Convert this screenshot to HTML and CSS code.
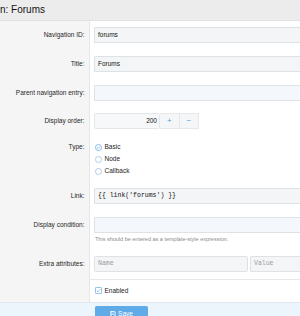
FILE: index.html
```html
<!DOCTYPE html>
<html>
<head>
<meta charset="utf-8">
<link rel="stylesheet" href="styles.css">
</head>
<body>
<div class="page">
  <h1 class="title">n: Forums</h1>
  <div class="form">
    <div class="row">
      <div class="label">Navigation ID:</div>
      <div class="ctrl"><div class="input input--open">forums</div></div>
    </div>
    <div class="row">
      <div class="label">Title:</div>
      <div class="ctrl"><div class="input input--open">Forums</div></div>
    </div>
    <div class="row">
      <div class="label">Parent navigation entry:</div>
      <div class="ctrl"><div class="input input--open input--select"></div></div>
    </div>
    <div class="row">
      <div class="label">Display order:</div>
      <div class="ctrl">
        <div class="numbox">
          <div class="input input--num">200</div>
          <div class="numbtn">+</div>
          <div class="numbtn">&minus;</div>
        </div>
      </div>
    </div>
    <div class="row row--choices">
      <div class="label label--choices">Type:</div>
      <div class="ctrl ctrl--choices">
        <div class="choice">
          <svg class="radio" viewBox="0 0 8 8" width="7" height="7"><circle cx="4" cy="4" r="3.5" fill="#fff" stroke="#5aa6e3" stroke-width="0.8"/><path d="M2.3 4.1 L3.5 5.2 L5.8 2.9" fill="none" stroke="#5aa6e3" stroke-width="0.8"/></svg>
          <span>Basic</span>
        </div>
        <div class="choice">
          <svg class="radio" viewBox="0 0 8 8" width="7" height="7"><circle cx="4" cy="4" r="3.5" fill="#fff" stroke="#8fbde3" stroke-width="0.8"/></svg>
          <span>Node</span>
        </div>
        <div class="choice">
          <svg class="radio" viewBox="0 0 8 8" width="7" height="7"><circle cx="4" cy="4" r="3.5" fill="#fff" stroke="#8fbde3" stroke-width="0.8"/></svg>
          <span>Callback</span>
        </div>
      </div>
    </div>
    <div class="row">
      <div class="label">Link:</div>
      <div class="ctrl"><div class="input input--open input--code">{{ link('forums') }}</div></div>
    </div>
    <div class="row">
      <div class="label">Display condition:</div>
      <div class="ctrl">
        <div class="input input--open input--code input--blue"></div>
        <div class="hint">This should be entered as a template-style expression.</div>
      </div>
    </div>
    <div class="row">
      <div class="label">Extra attributes:</div>
      <div class="ctrl">
        <div class="pair">
          <div class="input input--code input--ph input--name">Name</div>
          <div class="input input--open input--code input--ph input--value">Value</div>
        </div>
      </div>
    </div>
    <div class="row row--check">
      <div class="label"></div>
      <div class="ctrl ctrl--check">
        <div class="choice">
          <svg class="check" viewBox="0 0 8 8" width="7" height="7"><rect x="0.5" y="0.5" width="7" height="7" rx="0.8" fill="#fff" stroke="#5aa6e3" stroke-width="0.8"/><path d="M2 4.1 L3.4 5.4 L6 2.7" fill="none" stroke="#5aa6e3" stroke-width="0.8"/></svg>
          <span>Enabled</span>
        </div>
      </div>
    </div>
  </div>
  <div class="footer">
    <div class="btn">
      <svg viewBox="0 0 8 8" width="6" height="6"><path d="M0.6 0.6 H6 L7.4 2 V7.4 H0.6 Z" fill="none" stroke="#fff" stroke-width="0.8"/><rect x="2" y="0.6" width="3.6" height="2.2" fill="none" stroke="#fff" stroke-width="0.7"/><rect x="2" y="4.6" width="4" height="2.8" fill="none" stroke="#fff" stroke-width="0.7"/></svg>
      <span>Save</span>
    </div>
  </div>
</div>
</body>
</html>
```

FILE: styles.css
```css
html, body {
  margin: 0;
  padding: 0;
  overflow: hidden;
  background: #fff;
}
body {
  font-family: "Liberation Sans", Arial, sans-serif;
  color: #1d1d1d;
}
.page {
  width: 300px;
}
.title {
  margin: 0;
  height: 21px;
  box-sizing: border-box;
  padding: 4px 0 0 0;
  font-size: 10px;
  line-height: 12px;
  font-weight: normal;
  color: #141414;
  background: #ececec;
  border-bottom: 1px solid #e2e2e2;
}
.form {
  display: flex;
  flex-direction: column;
}
.row {
  display: flex;
}
.label {
  width: 90px;
  flex: none;
  box-sizing: border-box;
  background: #f5f5f5;
  border-right: 1px solid #e6e6e6;
  text-align: right;
  padding: 6px 4.5px 0 0;
  font-size: 6.5px;
  line-height: 16px;
  color: #1f1f1f;
}
.ctrl {
  flex: 1;
  min-width: 0;
  padding: 6px 0 6.75px 4px;
}
.input {
  box-sizing: border-box;
  height: 16px;
  background: #f3f5f6;
  border: 1px solid #dfe2e5;
  border-radius: 1.5px;
  padding: 0 3px;
  font-size: 6.5px;
  line-height: 14px;
  color: #141414;
  white-space: nowrap;
  overflow: hidden;
}
.input--open {
  border-right: none;
  border-top-right-radius: 0;
  border-bottom-right-radius: 0;
}
.input--select, .input--blue {
  background: #f4f7fb;
}
.input--code {
  font-family: "Liberation Mono", "DejaVu Sans Mono", monospace;
}
.input--ph {
  color: #9aa0a6;
}
.numbox {
  display: flex;
  width: 105px;
  height: 16px;
}
.input--num {
  width: 66px;
  flex: none;
  text-align: right;
  padding-right: 2px;
  background: #f7f8f9;
  border: 1px solid #e4e6e8;
}
.numbtn {
  width: 19.5px;
  height: 16px;
  box-sizing: border-box;
  background: #f5f6f7;
  border: 1px solid #e6e8ea;
  border-left: none;
  text-align: center;
  font-size: 8px;
  line-height: 14px;
  color: #4e9fe0;
}
.row--choices .label {
  padding-top: 5px;
  line-height: 12px;
}
.ctrl--choices {
  padding: 5px 0 5px 5px;
}
.choice {
  display: flex;
  align-items: center;
  height: 12px;
  font-size: 6.5px;
  line-height: 12px;
  color: #1d1d1d;
}
.choice svg {
  flex: none;
  margin-right: 2.5px;
}
.hint {
  margin-top: 2px;
  font-size: 5.5px;
  line-height: 8.5px;
  color: #8a8a8a;
  padding-left: 1px;
  white-space: nowrap;
}
.pair {
  display: flex;
  gap: 2px;
}
.input--name {
  width: 154px;
  flex: none;
}
.input--value {
  flex: 1;
  min-width: 0;
}
.row--check .label {
  padding-top: 0;
}
.ctrl--check {
  border-top: 1px solid #e8e8e8;
  padding: 5px 0 5px 5px;
}
.footer {
  background: #edf5fc;
  border-top: 1px solid #dfe8f0;
  padding: 3px 0 0 95px;
  height: 20px;
}
.btn {
  display: flex;
  align-items: center;
  justify-content: center;
  gap: 2px;
  width: 53px;
  height: 16px;
  background: #5fabe8;
  border-radius: 1.5px;
  color: #fff;
  font-size: 6.5px;
  line-height: 12px;
}
```
